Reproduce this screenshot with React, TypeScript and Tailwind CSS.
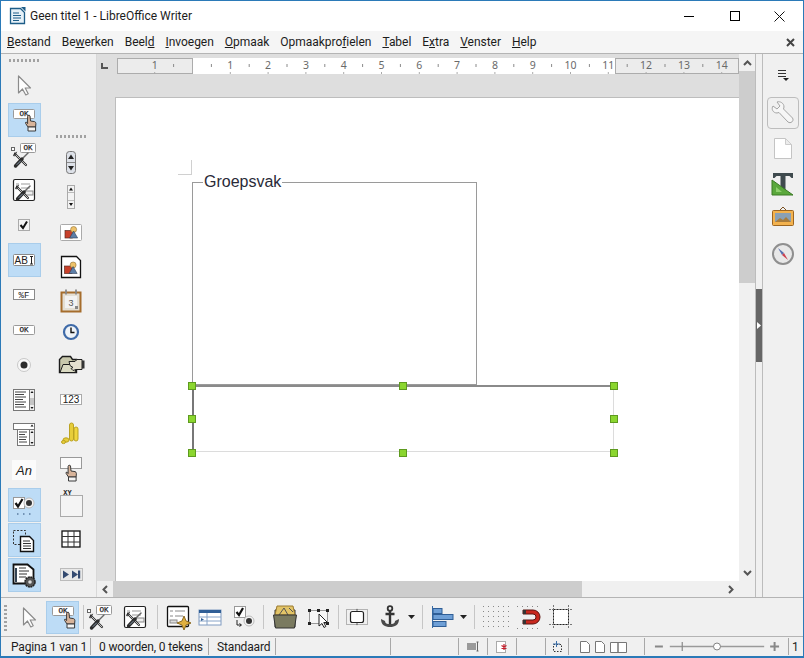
import React from "react";

const F = "'Liberation Sans', Arial, sans-serif";

const Ico = ({ children, s = 32 }: { children?: React.ReactNode; s?: number }) => (
  <svg width={s} height={s} viewBox="0 0 32 32" className="block shrink-0">{children}</svg>
);

const Hand = ({ x, y }: { x: number; y: number }) => (
  <g transform={`translate(${x} ${y})`} stroke="#3a3a3a" strokeWidth="1" strokeLinejoin="round">
    <path d="M3 0.5q1.5-1 2 .5L5.5 6 9.5 6.6q1.4.4 1.4 2L10.6 12H3L0.6 8.4q-.6-1.4 1-1.2L2.6 8.6 2.6 1.5Z" fill="#d8b49a" />
    <rect x="3" y="12" width="7.6" height="4" fill="#f4f4f4" />
  </g>
);

const OkBox = ({ x, y, w = 21, h = 10 }: { x: number; y: number; w?: number; h?: number }) => (
  <g>
    <rect x={x} y={y} width={w} height={h} rx="1" fill="#fff" stroke="#9a9a9a" />
    <text x={x + w / 2} y={y + h - 2.2} textAnchor="middle" fontSize="7.5" fontFamily="'Liberation Mono', monospace" stroke="#222" strokeWidth=".25" fill="#222">OK</text>
  </g>
);

const Tools = ({ x = 0, y = 0 }: { x?: number; y?: number }) => (
  <g transform={`translate(${x} ${y})`} strokeLinecap="round">
    <path d="M3 3 14 14" stroke="#2c2c2c" strokeWidth="2.200" />
    <path d="M3 3 14 14" stroke="#e8e8e8" strokeWidth=".8" />
    <path d="M1.500 4.500 3 1.500M4.500 1.200 2.500 5" stroke="#2c2c2c" strokeWidth=".9" />
    <path d="M16 2 10 8" stroke="#666" strokeWidth="1.400" />
    <path d="M10 8 3.500 15" stroke="#2c2c2c" strokeWidth="3.400" />
    <path d="M8.500 10 5 13.500" stroke="#8496aa" strokeWidth="1" />
  </g>
);

const Arrow = () => (
  <Ico>
    <path d="M10.500 7 10.500 24 14.500 20 17.800 26 20.200 24.800 17.200 19 22.500 19Z" fill="#fdfdfd" stroke="#8b8b8b" strokeWidth="1.200" strokeLinejoin="round" />
  </Ico>
);
const OkHand = () => (
  <Ico>
    <OkBox x={5.500} y={5.500} w={21} h={9} />
    <Hand x={17} y={11} />
  </Ico>
);
const ToolsOk = () => (
  <Ico>
    <rect x="3.500" y="8.500" width="3" height="3" fill="#fff" stroke="#666" />
    <OkBox x={12.500} y={4.500} w={15} h={9} />
    <Tools x={4} y={12} />
  </Ico>
);
const FormTools = () => (
  <Ico>
    <rect x="5.500" y="5.500" width="21" height="21" rx="1.500" fill="#fff" stroke="#222" strokeWidth="1.200" />
    <path d="M8 10h3M13 10h9M8 14h3M13 14h9" stroke="#999" />
    <rect x="17" y="17" width="8" height="4" fill="#eee" stroke="#888" />
    <Tools x={6} y={10} />
  </Ico>
);
const Check = () => (
  <Ico>
    <rect x="10.500" y="10.500" width="11" height="11" fill="#f3f3f3" stroke="#aaa" />
    <path d="M12.500 16l2.500 3 4-6.500" fill="none" stroke="#111" strokeWidth="2" />
  </Ico>
);
const Ab = () => (
  <Ico>
    <rect x="5.500" y="10.500" width="21" height="11" rx="1" fill="#fff" stroke="#8a8a8a" />
    <text x="6.500" y="19.500" fontSize="10" fontFamily={F} fill="#222">AB</text>
    <path d="M22 12.500h3M22 20h3M23.500 12.500v7.500" stroke="#222" fill="none" />
  </Ico>
);
const Pf = () => (
  <Ico>
    <rect x="5.500" y="10.500" width="21" height="10" fill="#fff" stroke="#8a8a8a" />
    <text x="16" y="19" textAnchor="middle" fontSize="9" fontFamily="'Liberation Mono', monospace" fill="#222">%F</text>
  </Ico>
);
const Ok2 = () => (
  <Ico>
    <OkBox x={5.500} y={11.500} w={21} h={9} />
  </Ico>
);
const Radio = () => (
  <Ico>
    <circle cx="16" cy="16" r="6.500" fill="#f8f8f8" stroke="#c8c8c8" />
    <circle cx="16" cy="16" r="3.500" fill="#2c2c2c" />
  </Ico>
);
const ListBox = () => (
  <Ico>
    <rect x="5.500" y="5.500" width="21" height="21" fill="#fff" stroke="#777" />
    <path d="M7 8h11M7 10.500h9M7 13h11M7 15.500h8M7 18h11M7 20.500h9M7 23h11" stroke="#444" />
    <rect x="21.500" y="5.500" width="5" height="21" fill="#eee" stroke="#777" />
    <path d="M24 7l-1.500 2h3ZM24 25l-1.500-2h3Z" fill="#111" />
    <rect x="22" y="14" width="4" height="7" fill="#c4c4c4" />
  </Ico>
);
const Combo = () => (
  <Ico>
    <rect x="5.500" y="4.500" width="21" height="6" fill="#fff" stroke="#777" />
    <path d="M24 5.500l-1.500 2h3Z" fill="#111" />
    <rect x="9.500" y="10.500" width="17" height="16" fill="#fff" stroke="#777" />
    <path d="M11 13h8M11 15.500h6M11 18h8M11 20.500h7M11 23h8" stroke="#444" />
    <rect x="21.500" y="10.500" width="5" height="16" fill="#eee" stroke="#777" />
    <path d="M24 12l-1.500 2h3ZM24 25l-1.500-2h3Z" fill="#111" />
  </Ico>
);
const An = () => (
  <Ico>
    <rect x="4" y="6" width="24" height="20" fill="#fbfbfb" />
    <text x="16" y="21" textAnchor="middle" fontSize="13" fontStyle="italic" fontFamily={F} fill="#222">An</text>
  </Ico>
);
const CheckRadio = () => (
  <Ico>
    <rect x="5.500" y="8.500" width="11" height="11" fill="#fff" stroke="#999" />
    <path d="M7.500 14l2.500 3.500 4.500-7.500" fill="none" stroke="#111" strokeWidth="2.200" />
    <circle cx="21" cy="14" r="5" fill="#f4f4f4" stroke="#bbb" />
    <circle cx="21" cy="14" r="3" fill="#333" />
    <path d="M9 25h1.500M15 25h1.500M21 25h1.500" stroke="#5a7ba0" strokeWidth="1.500" />
  </Ico>
);
const PageSel = () => (
  <Ico>
    <rect x="5.500" y="6.500" width="12" height="14" fill="none" stroke="#333" strokeDasharray="2 1.500" />
    <path d="M12.500 12.500h9l4 4v11h-13Z" fill="#fff" stroke="#111" strokeWidth="1.400" />
    <path d="M15 17h7M15 19.500h8M15 22h8M15 24.500h8" stroke="#333" />
  </Ico>
);
const DocGear = () => (
  <Ico>
    <path d="M5.500 5.500h14l6 5v14h-20Z" fill="#fff" stroke="#111" strokeWidth="1.800" />
    <path d="M8 9v14" stroke="#345" strokeWidth="2" />
    <path d="M11 9h7M11 12h10M11 15h8M11 18h7" stroke="#333" />
    <circle cx="22" cy="23" r="5" fill="#555" stroke="#222" strokeWidth="1.500" strokeDasharray="2 .6" />
    <circle cx="22" cy="23" r="1.800" fill="#ddd" />
  </Ico>
);
const SpinBig = () => (
  <Ico>
    <rect x="11.500" y="5.500" width="9" height="22" rx="3" fill="#dde1e8" stroke="#777" />
    <path d="M12 16.500h8" stroke="#888" />
    <path d="M16 8.500l-3 4.500h6ZM16 24.500l-3-4.500h6Z" fill="#222" />
  </Ico>
);
const SpinSmall = () => (
  <Ico>
    <rect x="12.500" y="4.500" width="7" height="23" fill="#f3f3f3" stroke="#aaa" />
    <path d="M13 11.500h6M13 19.500h6" stroke="#bbb" />
    <path d="M16 6.500l-2 3h4ZM16 25l-2-3h4Z" fill="#111" />
  </Ico>
);
const Pic = ({ x, y }: { x: number; y: number }) => (
  <g transform={`translate(${x} ${y}) scale(1.150)`}>
    <rect x="0" y="3.500" width="6.500" height="6.500" fill="#c8402a" stroke="#5a2a20" strokeWidth=".6" />
    <circle cx="7.500" cy="2.600" r="2.600" fill="#eec26a" stroke="#8a6a30" strokeWidth=".5" />
    <path d="M4 10l3.500-6 3.500 6Z" fill="#5c7fa8" stroke="#2f3f55" strokeWidth=".5" />
  </g>
);
const ImgBtn = () => (
  <Ico>
    <rect x="5.500" y="8.500" width="21" height="16" rx="1" fill="#fff" stroke="#aaa" />
    <Pic x={10} y={10.500} />
  </Ico>
);
const ImgDoc = () => (
  <Ico>
    <path d="M6.500 5.500h15l4 4v17h-19Z" fill="#fff" stroke="#111" strokeWidth="1.300" />
    <Pic x={9.500} y={11} />
  </Ico>
);
const Cal = () => (
  <Ico>
    <rect x="6.500" y="6.500" width="19" height="19" fill="#e4dfd4" stroke="#a56d2c" strokeWidth="2" />
    <rect x="10" y="10" width="12" height="12" fill="#f2f2f2" />
    <path d="M11 3.500v5M21 3.500v5" stroke="#888" strokeWidth="1.800" />
    <text x="16" y="20" textAnchor="middle" fontSize="9" fontFamily={F} fill="#555">3</text>
    <rect x="20" y="20" width="3" height="3" fill="#888" />
  </Ico>
);
const Clock = () => (
  <Ico>
    <circle cx="16" cy="15" r="7" fill="#eef3f8" stroke="#3e6aa8" strokeWidth="2.200" />
    <path d="M16 10.500V15.500H19.500" fill="none" stroke="#111" strokeWidth="1.400" />
  </Ico>
);
const FolderHand = () => (
  <Ico>
    <path d="M4.500 24.500V11.500l3-3h8l2 3h4v13Z" fill="#c8c8ac" stroke="#1c1c1c" strokeWidth="1.400" />
    <path d="M5 24.500l3-8h14l-2 8Z" fill="#dadac2" stroke="#1c1c1c" />
    <path d="M14 13.500h6l2-2h5v10h-6l-3 1-2-2 2-1-3-2Z" fill="#e5e0d0" stroke="#222" />
    <rect x="27" y="12.500" width="2.500" height="8" fill="#333" />
  </Ico>
);
const N123 = () => (
  <Ico>
    <rect x="5.500" y="11.500" width="21" height="10" fill="#fff" stroke="#aaa" />
    <text x="16" y="20" textAnchor="middle" fontSize="10" fontFamily={F} fill="#222">123</text>
  </Ico>
);
const Coins = () => (
  <Ico>
    <rect x="14.500" y="5" width="4" height="18" rx="2" fill="#e7cd3a" stroke="#bba322" />
    <rect x="19" y="9" width="4" height="14" rx="2" fill="#f0d63e" stroke="#bba322" />
    <ellipse cx="11" cy="22" rx="3" ry="2.200" fill="#e7cd3a" stroke="#bba322" />
    <ellipse cx="8.500" cy="24" rx="2" ry="1.600" fill="#e7cd3a" stroke="#bba322" />
  </Ico>
);
const BtnHand = () => (
  <Ico>
    <rect x="5.500" y="4.500" width="21" height="11" fill="#fbfbfb" stroke="#999" />
    <Hand x={10.500} y={12} />
  </Ico>
);
const XY = () => (
  <Ico>
    <rect x="5.500" y="7.500" width="22" height="21" fill="#f4f4f4" stroke="#aaa" />
    <text x="12.500" y="7" textAnchor="middle" fontSize="7" fontWeight="700" fontFamily="'Liberation Mono', monospace" fill="#222">XY</text>
  </Ico>
);
const Tbl = () => (
  <Ico>
    <rect x="7" y="8" width="18" height="16" fill="#fff" stroke="#111" strokeWidth="1.300" />
    <path d="M13 8v16M19 8v16M7 13.500h18M7 19h18" stroke="#333" />
  </Ico>
);
const Nav = () => (
  <Ico>
    <rect x="5.500" y="10.500" width="22" height="12" fill="#e8e8e8" stroke="#bbb" />
    <path d="M8 12.500v8l6-4ZM17 12.500v8l6-4Z" fill="#344a70" />
    <rect x="23" y="12.500" width="2.200" height="8" fill="#344a70" />
  </Ico>
);
const Wizard = () => (
  <Ico>
    <rect x="5.500" y="5.500" width="21" height="20" rx="1" fill="#fff" stroke="#111" strokeWidth="1.300" />
    <path d="M8 10h3M13 10h10M8 15h3M13 15h8" stroke="#888" />
    <rect x="8" y="19" width="7" height="3" fill="#ddd" stroke="#888" />
    <path d="M22 15l2 5 5 2-5 2-2 5-2-5-5-2 5-2Z" fill="#e0b040" stroke="#8a6820" />
  </Ico>
);
const TableCtl = () => (
  <Ico>
    <rect x="5" y="9" width="22" height="15" fill="#fff" stroke="#7f9ac0" />
    <rect x="5" y="9" width="22" height="3" fill="#2f5e96" />
    <path d="M5 16h22M5 20h22M13 12v12" stroke="#88a4c8" />
    <path d="M7 17l3 1.500-3 1.500Z" fill="#2f5e96" />
  </Ico>
);
const CheckRadioArrow = () => (
  <Ico>
    <rect x="7.500" y="5.500" width="11" height="11" fill="#fff" stroke="#999" />
    <path d="M9.500 11l2.500 3 4-7" fill="none" stroke="#111" strokeWidth="2.200" />
    <circle cx="22" cy="20" r="5" fill="#f4f4f4" stroke="#bbb" />
    <circle cx="22" cy="20" r="3" fill="#333" />
    <path d="M10 19v5h4M12.500 22.500l2 1.500-2 1.500" fill="none" stroke="#222" />
  </Ico>
);
const FolderBig = () => (
  <Ico>
    <path d="M6 26V9h20v17Z" fill="#70705a" stroke="#333" />
    <path d="M8 5h16l2 9H6Z" fill="#e2c468" stroke="#9a7a30" />
    <path d="M10 14l5-7 4 7M20 7l4 4" fill="none" stroke="#555" />
    <path d="M4.500 14h23l-2 13h-19Z" fill="#7a7a60" stroke="#333" />
  </Ico>
);
const SelectIco = () => (
  <Ico>
    <rect x="7.500" y="9.500" width="18" height="13" fill="#f6f6f6" stroke="#999" />
    <path d="M6 8h3v3H6ZM15 8h3v3h-3ZM24 8h3v3h-3ZM6 21h3v3H6ZM24 21h3v3h-3Z" fill="#222" />
    <path d="M17 13v12l3-2.500 2 4 1.800-1-2-4h3.700Z" fill="#fff" stroke="#222" strokeLinejoin="round" />
  </Ico>
);
const FrameIco = () => (
  <Ico>
    <rect x="5.500" y="8.500" width="21" height="15" fill="none" stroke="#777" strokeDasharray="1 1" />
    <rect x="9.500" y="10.500" width="13" height="11" rx="2" fill="#fff" stroke="#222" strokeWidth="1.200" />
    <path d="M15 9.500l1-2 1 2ZM15 22.500l1 2 1-2Z" fill="#555" />
  </Ico>
);
const Anchor = () => (
  <Ico>
    <circle cx="16" cy="7.500" r="2.300" fill="none" stroke="#333" strokeWidth="1.800" />
    <path d="M16 10v14M11.500 13h9" stroke="#333" strokeWidth="2.400" />
    <path d="M7 18c0 6 4 8 9 8s9-2 9-8l-4 2c0 2.500-2 3-5 3s-5-.5-5-3Z" fill="#4a4a4a" />
  </Ico>
);
const Caret = () => <svg width="8" height="5" viewBox="0 0 8 5" className="block shrink-0"><path d="M0 0h7L3.500 4Z" fill="#222" /></svg>;
const AlignIco = () => (
  <Ico>
    <path d="M5.500 5v22" stroke="#3a6ea8" />
    <rect x="6" y="7.500" width="9" height="5" fill="#6e9fd6" stroke="#2f5e96" />
    <rect x="6" y="13.500" width="20" height="5" fill="#6e9fd6" stroke="#2f5e96" />
    <rect x="6" y="20.500" width="13" height="5" fill="#6e9fd6" stroke="#2f5e96" />
  </Ico>
);
const Dots = () => (
  <Ico>
    {[5, 10, 15, 20, 25].map((y) => [4, 9, 14, 19, 24, 29].map((x) => <rect key={`${x}-${y}`} x={x} y={y} width="1" height="1" fill="#888" />))}
  </Ico>
);
const Magnet = () => (
  <Ico>
    {[5, 27].map((y) => [4, 9, 14, 19, 24].map((x) => <rect key={`${x}-${y}`} x={x} y={y} width="1" height="1" fill="#888" />))}
    <path d="M10 9h10a7 7 0 0 1 0 14H10v-4h10a3 3 0 0 0 0-6H10Z" fill="#c8281e" stroke="#5c1410" />
    <rect x="10" y="9" width="3" height="4" fill="#333" />
    <rect x="10" y="19" width="3" height="4" fill="#333" />
  </Ico>
);
const Guides = () => (
  <Ico>
    <rect x="8.500" y="8.500" width="15" height="15" fill="#fff" stroke="#222" />
    <path d="M4 8.500h24M4 23.500h24M8.500 4v24M23.500 4v24" stroke="#777" strokeDasharray="2 1" />
  </Ico>
);
const Sep = () => <div className="w-px h-[24px] bg-[#c6c6c6] shrink-0" />;
const Handle = () => <div className="w-[30px] h-[3px] shrink-0 bg-[repeating-linear-gradient(90deg,#a2a2a2_0,#a2a2a2_2px,transparent_2px,transparent_4px)]" />;

const Cell = ({ on, children }: { on?: boolean; children: React.ReactNode }) => (
  <div className={`w-[33px] h-[34px] mb-px flex items-center justify-center shrink-0 ${on ? "bg-[#bddcf6] border border-[#a9cdeb]" : ""}`}>{children}</div>
);

const ruler = Array.from({ length: 16 }, (_, i) => i - 1);

const Ruler = () => (
  <svg width="622" height="16" viewBox="0 0 622 16" className="block">
    <rect x="0" y="0" width="622" height="16" fill="#fff" />
    <rect x=".5" y=".5" width="75" height="15" fill="#ececec" stroke="#acacac" />
    <rect x="498.500" y=".5" width="123" height="15" fill="#ececec" stroke="#acacac" />
    {ruler.filter((n) => n !== 0).map((n) => (
      <text key={n} x={75.5 + n * 37.8} y="11" textAnchor="middle" fontSize="10.500" fontFamily="'Noto Sans', sans-serif" fill="#6a6a6a">{Math.abs(n)}</text>
    ))}
    {ruler.map((n) => (
      <path key={n} d={`M${(75.5 + (n + 0.5) * 37.8).toFixed(1)} 6v3`} stroke="#8a8a8a" />
    ))}
    {ruler.map((n) => (
      <path key={n} d={`M${(75.5 + n * 37.8).toFixed(1)} 14v2`} stroke="#aaa" />
    ))}
  </svg>
);

const Grip = ({ x, y }: { x: string; y: string }) => (
  <div className={`absolute w-[8px] h-[8px] bg-[#8bd62f] border border-[#5e9a1f] ${x} ${y}`} />
);

const menu: [string, string, string][] = [
  ["", "B", "estand"], ["Be", "w", "erken"], ["Beel", "d", ""], ["", "I", "nvoegen"], ["", "O", "pmaak"],
  ["Opmaakpro", "f", "ielen"], ["", "T", "abel"], ["E", "x", "tra"], ["", "V", "enster"], ["", "H", "elp"],
];

const Stat = ({ w, children, cls = "" }: { w: string; children?: React.ReactNode; cls?: string }) => (
  <div className={`h-[17px] flex items-center shrink-0 whitespace-nowrap border-r border-[#a8a8a8] ${w} ${cls}`}>{children}</div>
);

export default function App() {
  const ui = { fontFamily: "Roboto, 'Noto Sans', sans-serif" };
  return (
    <div className="w-[804px] h-[658px] flex flex-col overflow-hidden bg-[#f0f0f0] border border-b-2 border-[#2b7ab8] text-[#1c1c1c]" style={ui}>
      {/* title */}
      <div className="h-[30px] shrink-0 bg-white flex items-center pl-[8px]">
        <svg width="17" height="18" viewBox="0 0 17 18" className="block shrink-0 mr-[4px]">
          <path d="M1.500 1.500h10l4 4v11h-14Z" fill="#e6f1f8" stroke="#1d5d88" strokeWidth="1.300" />
          <path d="M12 0h4.500v4.500Z" fill="#1d5d88" />
          <path d="M4 6h6M4 8.500h8M4 11h8M4 13.500h6" stroke="#1d5d88" />
        </svg>
        <span className="text-[12px] leading-none">Geen titel 1 - LibreOffice Writer</span>
        <div className="ml-auto flex items-center pr-px">
          <div className="w-[46px] h-[30px] flex items-center justify-center"><div className="w-[10px] h-px bg-black" /></div>
          <div className="w-[45px] h-[30px] flex items-center justify-center"><div className="w-[10px] h-[10px] border border-black" /></div>
          <div className="w-[45px] h-[30px] flex items-center justify-center">
            <svg width="11" height="11" viewBox="0 0 11 11"><path d="M.5.5l10 10M10.500.5l-10 10" stroke="#111" /></svg>
          </div>
        </div>
      </div>
      {/* menu */}
      <div className="h-[23px] shrink-0 bg-[#f5f5f5] border-b border-[#b4b4b4] flex items-center pl-[6px] pr-[8px] text-[12px] gap-[11px] tracking-[-0.03px]">
        {menu.map(([a, b, c]) => (
          <span key={a + b + c}>{a}<span className="underline">{b}</span>{c}</span>
        ))}
        <svg width="9" height="9" viewBox="0 0 9 9" className="ml-auto"><path d="M1 1l7 7M8 1l-7 7" stroke="#444" strokeWidth="2" /></svg>
      </div>
      {/* middle */}
      <div className="flex-1 min-h-0 flex">
        {/* left toolbars */}
        <div className="w-[96px] shrink-0 flex bg-[#f0f0f0] border-r border-[#d8d8d8]">
          <div className="w-[46px] shrink-0 flex flex-col items-center pt-[5px]">
            <Handle />
            <div className="h-[6px] shrink-0" />
            <Cell><Arrow /></Cell>
            <Cell on><OkHand /></Cell>
            <Cell><ToolsOk /></Cell>
            <Cell><FormTools /></Cell>
            <Cell><Check /></Cell>
            <Cell on><Ab /></Cell>
            <Cell><Pf /></Cell>
            <Cell><Ok2 /></Cell>
            <Cell><Radio /></Cell>
            <Cell><ListBox /></Cell>
            <Cell><Combo /></Cell>
            <Cell><An /></Cell>
            <Cell on><CheckRadio /></Cell>
            <Cell on><PageSel /></Cell>
            <Cell on><DocGear /></Cell>
          </div>
          <div className="flex-1 flex flex-col items-center pt-[81px] pr-[2px]">
            <Handle />
            <div className="h-[7px] shrink-0" />
            <Cell><SpinBig /></Cell>
            <Cell><SpinSmall /></Cell>
            <Cell><ImgBtn /></Cell>
            <Cell><ImgDoc /></Cell>
            <Cell><Cal /></Cell>
            <div className="mt-[-4px]"><Cell><Clock /></Cell></div>
            <div className="mt-[-4px]"><Cell><FolderHand /></Cell></div>
            <Cell><N123 /></Cell>
            <Cell><Coins /></Cell>
            <Cell><BtnHand /></Cell>
            <Cell><XY /></Cell>
            <Cell><Tbl /></Cell>
            <Cell><Nav /></Cell>
          </div>
        </div>
        {/* center */}
        <div className="w-[658px] shrink-0 flex flex-col">
          <div className="flex-1 min-h-0 flex">
            <div className="flex-1 min-w-0 bg-[#dedede] flex flex-col">
              <div className="h-[20px] shrink-0 flex items-end">
                <div className="w-[20px] h-[16px] shrink-0 flex items-start justify-center pt-[5px]">
                  <div className="w-[7px] h-[6px] border-l-2 border-b-2 border-[#555] -translate-x-[3px]" />
                </div>
                <Ruler />
              </div>
              <div className="flex-1 min-h-0 pl-[18px] pt-[23px]">
                <div className="relative h-full bg-white border-l border-t border-[#bdbdbd]" style={{ fontFamily: F }}>
                  {/* page corner mark */}
                  <div className="absolute left-[62px] top-[62px] w-[14px] h-[15px] border-r border-b border-[#d0d0d0]" />
                  {/* group box */}
                  <div className="absolute left-[76px] top-[84px] w-[285px] h-[203px] border border-[#9a9a9a]" />
                  <div className="absolute left-[87px] top-[74px] px-px bg-white text-[16px] leading-[20px] text-[#2a2a38]">Groepsvak</div>
                  {/* selected control */}
                  <div className="absolute left-[76px] top-[287px] w-[422px] h-[67px] border border-[#dcdcdc]" />
                  <div className="absolute left-[76px] top-[287px] w-[422px] h-[2px] bg-[#8a8a8a]" />
                  <div className="absolute left-[76px] top-[287px] w-[2px] h-[67px] bg-[#777]" />
                  <Grip x="left-[72px]" y="top-[284px]" />
                  <Grip x="left-[283px]" y="top-[284px]" />
                  <Grip x="left-[494px]" y="top-[284px]" />
                  <Grip x="left-[72px]" y="top-[317px]" />
                  <Grip x="left-[494px]" y="top-[317px]" />
                  <Grip x="left-[72px]" y="top-[351px]" />
                  <Grip x="left-[283px]" y="top-[351px]" />
                  <Grip x="left-[494px]" y="top-[351px]" />
                </div>
              </div>
            </div>
            {/* v scrollbar */}
            <div className="w-[16px] shrink-0 flex flex-col bg-[#f0f0f0]">
              <div className="h-[17px] shrink-0 flex items-center justify-center">
                <svg width="9" height="6" viewBox="0 0 9 6"><path d="M1 5l3.500-3.500L8 5" fill="none" stroke="#555" strokeWidth="2" /></svg>
              </div>
              <div className="h-[212px] shrink-0 bg-[#cdcdcd]" />
              <div className="flex-1" />
              <div className="h-[17px] shrink-0 flex items-center justify-center">
                <svg width="9" height="6" viewBox="0 0 9 6"><path d="M1 1l3.500 3.500L8 1" fill="none" stroke="#555" strokeWidth="2" /></svg>
              </div>
            </div>
          </div>
          {/* h scrollbar */}
          <div className="h-[16px] shrink-0 flex bg-[#f0f0f0]">
            <div className="w-[16px] flex items-center justify-center">
              <svg width="6" height="9" viewBox="0 0 6 9"><path d="M5 1L1.500 4.500 5 8" fill="none" stroke="#555" strokeWidth="2" /></svg>
            </div>
            <div className="w-[469px] bg-[#cdcdcd]" />
            <div className="flex-1" />
            <div className="w-[32px] flex items-center justify-start pl-[5px]">
              <svg width="6" height="9" viewBox="0 0 6 9"><path d="M1 1l3.500 3.500L1 8" fill="none" stroke="#555" strokeWidth="2" /></svg>
            </div>
          </div>
        </div>
        {/* deck gutter */}
        <div className="relative w-[8px] shrink-0 bg-[#f0f0f0] border-x border-[#bcbcbc]">
          <div className="absolute left-0 top-[235px] w-[6px] h-[73px] bg-[#666] flex items-center justify-center">
            <svg width="5" height="7" viewBox="0 0 5 7"><path d="M0 0l4 3.500L0 7Z" fill="#fff" /></svg>
          </div>
        </div>
        {/* sidebar */}
        <div className="flex-1 min-w-0 flex flex-col items-center pt-[14px] bg-[#f0f0f0]">
          <svg width="14" height="14" viewBox="0 0 14 14" className="block shrink-0">
            <path d="M2 2.500h8M2 5.500h8M2 8.500h8" stroke="#333" /><path d="M7 10h6l-3 3Z" fill="#222" />
          </svg>
          <div className="mt-[15px] w-[32px] h-[32px] rounded-[4px] border border-[#bdbdbd] flex items-center justify-center">
            <svg width="26" height="26" viewBox="0 0 26 26">
              <path d="M3 6l4 3 3-3-3-4c3-1 7 1 7 5l-.5 2 9 9c2 3-2 6-4.500 4l-9-9.500-2 .5C3 13 1 9 3 6Z" fill="#f6f6f6" stroke="#a4a4a4" />
            </svg>
          </div>
          <svg width="20" height="24" viewBox="0 0 20 24" className="block mt-[7px]">
            <path d="M1.500 2.500h11l6 6v14h-17Z" fill="#fff" stroke="#c4c4c4" />
            <path d="M12.500 2.500v6h6Z" fill="#ececec" stroke="#ccc" />
          </svg>
          <svg width="24" height="26" viewBox="0 0 24 26" className="block mt-[11px]">
            <path d="M2 2h20v5h-1.500l-2-2h-4v17h-5V5h-4l-2 2H2Z" fill="#3f4a4e" />
            <path d="M1 9l21 15H1Z" fill="#5aa83c" stroke="#3b7a25" />
            <path d="M5 16l6 5H5Z" fill="#8ed06c" />
          </svg>
          <svg width="24" height="22" viewBox="0 0 24 22" className="block mt-[9px]">
            <path d="M9 4l3-3 3 3" fill="none" stroke="#7a5020" />
            <rect x="1.500" y="4.500" width="21" height="15" rx="1" fill="#f3b24e" stroke="#9c6520" />
            <rect x="4" y="7" width="16" height="9" fill="#8aa0b4" />
            <path d="M4 16l5-4 3 2 3-3 5 5Z" fill="#a87c3c" />
          </svg>
          <svg width="24" height="24" viewBox="0 0 24 24" className="block mt-[14px]">
            <circle cx="12" cy="12" r="10" fill="#e8e8e8" stroke="#8f8f8f" strokeWidth="2" />
            <path d="M7 6l6 5-2 2Z" fill="#5670b0" /><path d="M17 18l-6-5 2-2Z" fill="#cc4050" />
          </svg>
        </div>
      </div>
      {/* bottom toolbar */}
      <div className="h-[39px] shrink-0 border-t border-[#b4b4b4] bg-[#f0f0f0] flex items-center pl-[3px]">
        <div className="w-[3px] h-[28px] mr-[6px] shrink-0 bg-[repeating-linear-gradient(0deg,#a2a2a2_0,#a2a2a2_2px,transparent_2px,transparent_4px)]" />
        <div className="w-[32px] flex justify-center"><Arrow /></div>
        <div className="w-[33px] h-[33px] ml-[1px] mr-[4px] bg-[#bddcf6] border border-[#a9cdeb] flex items-center justify-center"><OkHand /></div>
        <Sep />
        <ToolsOk />
        <div className="w-[3px]" />
        <FormTools />
        <div className="w-[6px]" />
        <Sep />
        <div className="ml-[4px]"><Wizard /></div>
        <TableCtl />
        <div className="w-[1px]" />
        <CheckRadioArrow />
        <div className="w-[4px]" />
        <Sep />
        <div className="ml-[5px]"><FolderBig /></div>
        <div className="w-[1px]" />
        <SelectIco />
        <div className="w-[4px]" />
        <Sep />
        <div className="ml-[2px]"><FrameIco /></div>
        <div className="ml-[1px]"><Anchor /></div>
        <div className="ml-[2px]"><Caret /></div>
        <div className="w-[6px]" />
        <Sep />
        <div className="ml-[4px]"><AlignIco /></div>
        <div className="ml-[1px]"><Caret /></div>
        <div className="w-[6px]" />
        <Sep />
        <div className="ml-[4px]"><Dots /></div>
        <div className="ml-[2px]"><Magnet /></div>
        <Guides />
      </div>
      {/* status bar */}
      <div className="h-[20px] shrink-0 border-t border-[#b4b4b4] bg-[#f0f0f0] flex items-center text-[12px] tracking-[-0.15px]">
        <Stat w="w-[90px]" cls="pl-[10px]">Pagina 1 van 1</Stat>
        <Stat w="w-[118px]" cls="pl-[8px]">0 woorden, 0 tekens</Stat>
        <Stat w="w-[67px]" cls="pl-[8px]">Standaard</Stat>
        <Stat w="w-[115px]" />
        <Stat w="w-[68px]" />
        <Stat w="w-[29px]" cls="justify-center">
          <svg width="12" height="11" viewBox="0 0 12 11"><rect x="0" y="2" width="9" height="7" fill="#9a9a9a" /><path d="M9.500 1h2M9.500 10h2M10.500 1v9" stroke="#666" /></svg>
        </Stat>
        <Stat w="w-[29px]" cls="justify-center">
          <svg width="12" height="12" viewBox="0 0 12 12"><rect x=".5" y=".5" width="9" height="11" fill="#fff" stroke="#aaa" /><path d="M8 3v6M5.500 4.500l5 3M10.500 4.500l-5 3" stroke="#c21f2c" strokeWidth="1.200" /></svg>
        </Stat>
        <Stat w="w-[29px]" />
        <Stat w="w-[23px]" cls="justify-center">
          <svg width="12" height="12" viewBox="0 0 12 12"><rect x="2.500" y="3.500" width="8" height="7" fill="none" stroke="#333" strokeDasharray="1.500 1.500" /><path d="M5.500 0v6M2 3h7" stroke="#3a6ea8" /></svg>
        </Stat>
        <Stat w="w-[76px]" cls="pl-[11px] gap-[5px]">
          {[0, 1].map((i) => (
            <svg key={i} width="10" height="12" viewBox="0 0 10 12"><path d="M.5.500h6l3 3v8H.5Z" fill="#fff" stroke="#777" /></svg>
          ))}
          <svg width="17" height="12" viewBox="0 0 17 12"><path d="M.5 1.500h7.500v10H.5ZM8 1.500h8.500v10H8Z" fill="#fff" stroke="#777" /></svg>
        </Stat>
        <div className="w-[144px] shrink-0 h-[17px] border-r border-[#a8a8a8] flex items-center">
          <svg width="144" height="17" viewBox="0 0 144 17" className="block">
            <path d="M10 8.500h8" stroke="#888" strokeWidth="2" />
            <path d="M25 8.500h95" stroke="#9a9a9a" strokeWidth="1.500" />
            <path d="M37.500 4v9" stroke="#888" strokeWidth="1.200" />
            <circle cx="72.500" cy="8.500" r="3.500" fill="#fff" stroke="#808080" />
            <path d="M126 8.500h9M130.500 4v9" stroke="#888" strokeWidth="2" />
          </svg>
        </div>
        <div className="pl-[3px] whitespace-nowrap">1</div>
      </div>
    </div>
  );
}
